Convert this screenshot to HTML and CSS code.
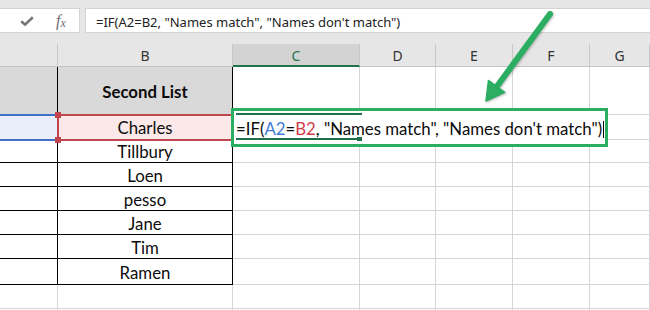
FILE: index.html
```html
<!DOCTYPE html>
<html>
<head>
<meta charset="utf-8">
<link rel="stylesheet" href="styles.css">
</head>
<body>
<div class="app">
  <div class="fbar">
    <div class="fbtns">
      <svg class="check" width="14" height="10" viewBox="0 0 14 10"><path d="M1.2 5.2 L5 8.6 L12.8 1.2" fill="none" stroke="#767676" stroke-width="2.6"/></svg>
      <span class="fx"><i>f</i><i class="x">x</i></span>
    </div>
    <div class="finput">=IF(A2=B2, "Names match", "Names don't match")</div>
  </div>
  <div class="sheet">
    <div class="hd"></div><div class="hd">B</div><div class="hd hd-sel">C</div><div class="hd">D</div><div class="hd">E</div><div class="hd">F</div><div class="hd">G</div>

    <div class="c bk grey"></div><div class="c bk grey title">Second List</div><div class="c"></div><div class="c"></div><div class="c"></div><div class="c"></div><div class="c"></div>

    <div class="c bk refa"></div><div class="c bk refb">Charles</div><div class="c"></div><div class="c"></div><div class="c"></div><div class="c"></div><div class="c"></div>

    <div class="c bk"></div><div class="c bk">Tillbury</div><div class="c"></div><div class="c"></div><div class="c"></div><div class="c"></div><div class="c"></div>

    <div class="c bk"></div><div class="c bk">Loen</div><div class="c"></div><div class="c"></div><div class="c"></div><div class="c"></div><div class="c"></div>

    <div class="c bk"></div><div class="c bk">pesso</div><div class="c"></div><div class="c"></div><div class="c"></div><div class="c"></div><div class="c"></div>

    <div class="c bk"></div><div class="c bk">Jane</div><div class="c"></div><div class="c"></div><div class="c"></div><div class="c"></div><div class="c"></div>

    <div class="c bk"></div><div class="c bk">Tim</div><div class="c"></div><div class="c"></div><div class="c"></div><div class="c"></div><div class="c"></div>

    <div class="c bk"></div><div class="c bk">Ramen</div><div class="c"></div><div class="c"></div><div class="c"></div><div class="c"></div><div class="c"></div>

    <div class="c"></div><div class="c"></div><div class="c"></div><div class="c"></div><div class="c"></div><div class="c"></div><div class="c"></div>

    <div class="c"></div><div class="c"></div><div class="c"></div><div class="c"></div><div class="c"></div><div class="c"></div><div class="c"></div>
  </div>

  <div class="sel sel-a"></div>
  <div class="sel sel-b"><span class="hdl hdl-t"></span><span class="hdl hdl-b"></span></div>

  <div class="editbox">
    <span class="act act-top"></span>
    <span class="act act-bot"></span>
    <span class="fill-handle"></span>
    <span class="etext">=IF(<span class="ra">A2</span>=<span class="rb">B2</span>, "Names match", "Names don't match")</span><span class="caret"></span>
  </div>

  <svg class="arrow" width="650" height="310" viewBox="0 0 650 310">
    <line x1="550" y1="14" x2="495" y2="89" stroke="#2bad62" stroke-width="6" stroke-linecap="round"/>
    <polygon points="486,101 488.5,80.5 504.7,92.3" fill="#2bad62" stroke="#2bad62" stroke-width="1.5" stroke-linejoin="round"/>
  </svg>
</div>
</body>
</html>
```

FILE: styles.css
```css
* { box-sizing: border-box; }
html, body { margin: 0; padding: 0; }
body { width: 650px; height: 310px; overflow: hidden; background: #fff; }

.app { position: relative; width: 650px; height: 310px; overflow: hidden; }

.fbar {
  height: 44px;
  background: #e6e6e6;
  padding-top: 8px;
  display: flex;
  gap: 5px;
  align-items: flex-start;
}
.fbtns {
  width: 81px;
  height: 25px;
  margin-left: -1px;
  background: #fff;
  border: 1px solid #d4d4d4;
  display: flex;
  align-items: center;
  padding-left: 20px;
  gap: 22px;
}
.check { display: block; margin-top: 1px; }
.fx {
  font-family: "Liberation Serif", serif;
  color: #6e6e6e;
  font-size: 16px;
  line-height: 1;
  display: flex;
  align-items: baseline;
}
.fx .x { font-size: 12px; position: relative; top: 1px; }

.finput {
  flex: 1;
  height: 25px;
  margin-right: -1px;
  background: #fff;
  border: 1px solid #d4d4d4;
  font-family: "Noto Sans", sans-serif;
  font-size: 13px;
  color: #222;
  display: flex;
  align-items: center;
  padding-left: 10px;
  padding-top: 2px;
  white-space: nowrap;
}

.sheet {
  display: grid;
  grid-template-columns: 58px 175px 127px 76px 77px 77px 60px;
  grid-template-rows: 23px 48px 25px 23px 24px 24px 24px 24px 26px 24px 30px;
}

.hd {
  background: #e6e6e6;
  border-right: 1px solid #c8c8c8;
  border-bottom: 1px solid #c4c4c4;
  font-family: "Noto Sans", sans-serif;
  font-size: 14px;
  color: #333;
  display: flex;
  align-items: center;
  justify-content: center;
}
.hd-sel {
  background: #d3d3d3;
  border-bottom: 2px solid #217346;
  color: #217346;
  padding-top: 1px;
}

.c {
  border-right: 1px solid #d6d6d6;
  border-bottom: 1px solid #d6d6d6;
  font-family: "Lato", sans-serif;
  font-size: 16.8px;
  color: #0c0c0c;
  display: flex;
  align-items: center;
  justify-content: center;
  white-space: nowrap;
  padding-top: 1px;
}
.c.bk { border-right-color: #000; border-bottom-color: #000; }
.grey { background: #d9d9d9; }
.title { font-weight: bold; }
.refa { background: #e9eef8; }
.refb { background: #fbe9e9; }

.sel { position: absolute; }
.sel-a {
  left: -4px; top: 114px; width: 63px; height: 27px;
  border: 2px solid #3f70c6;
}
.sel-b {
  left: 57px; top: 114px; width: 178px; height: 27px;
  border: 2px solid #c0454c;
}
.hdl {
  position: absolute;
  left: -4px;
  width: 6px; height: 6px;
  background: #c0454c;
}
.hdl-t { top: -4px; }
.hdl-b { bottom: -4px; }

.editbox {
  position: absolute;
  left: 231px; top: 108px;
  width: 377px; height: 39px;
  border: 3px solid #2bad62;
  background: #fff;
  display: flex;
  align-items: center;
  padding-left: 2px;
  padding-top: 1px;
  white-space: nowrap;
  font-family: "Lato", sans-serif;
  font-size: 16.8px;
  color: #0c0c0c;
}
.act { position: absolute; left: 2px; height: 2px; background: #21704a; }
.act-top { top: 2px; width: 126px; }
.act-bot { top: 27px; width: 121px; }
.fill-handle {
  position: absolute;
  left: 123px; top: 26px;
  width: 5px; height: 4px;
  background: #21704a;
}
.etext { position: relative; }
.ra { color: #3f7ad6; }
.rb { color: #d03a48; }
.caret {
  display: inline-block;
  width: 1px; height: 17px;
  background: #000;
  margin-left: 1px;
  position: relative; top: 1px;
}

.arrow {
  position: absolute; left: 0; top: 0;
  pointer-events: none;
  filter: drop-shadow(1px 1px 1px rgba(0,0,0,0.25));
}
```
